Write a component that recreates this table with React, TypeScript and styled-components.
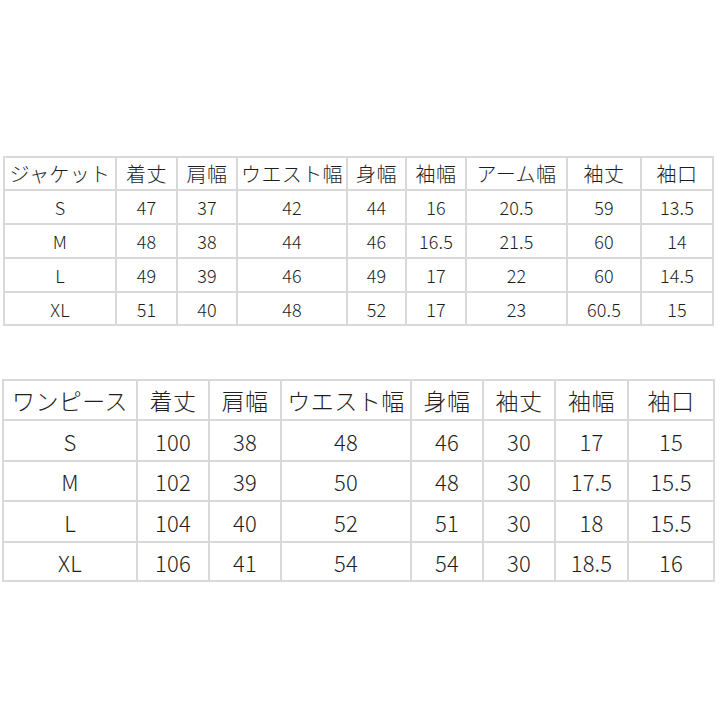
import styled, { createGlobalStyle } from 'styled-components'

interface SizeTable {
  columns: number[]
  rows: number[]
  headFont: number
  bodyFont: number
  head: string[]
  body: string[][]
}

const jacket: SizeTable = {
  columns: [110, 59, 58, 108, 57, 58, 99, 72, 70],
  rows: [31, 32, 32, 32, 31],
  headFont: 20,
  bodyFont: 18,
  head: ['ジャケット', '着丈', '肩幅', 'ウエスト幅', '身幅', '袖幅', 'アーム幅', '袖丈', '袖口'],
  body: [
    ['S', '47', '37', '42', '44', '16', '20.5', '59', '13.5'],
    ['M', '48', '38', '44', '46', '16.5', '21.5', '60', '14'],
    ['L', '49', '39', '46', '49', '17', '22', '60', '14.5'],
    ['XL', '51', '40', '48', '52', '17', '23', '60.5', '15'],
  ],
}

const onePiece: SizeTable = {
  columns: [132, 70, 70, 128, 70, 70, 71, 84],
  rows: [38, 39, 38, 39, 37],
  headFont: 23,
  bodyFont: 22,
  head: ['ワンピース', '着丈', '肩幅', 'ウエスト幅', '身幅', '袖丈', '袖幅', '袖口'],
  body: [
    ['S', '100', '38', '48', '46', '30', '17', '15'],
    ['M', '102', '39', '50', '48', '30', '17.5', '15.5'],
    ['L', '104', '40', '52', '51', '30', '18', '15.5'],
    ['XL', '106', '41', '54', '54', '30', '18.5', '16'],
  ],
}

/**
 * サイズ表ページ
 */
export default function App() {
  return (
    <>
      <GlobalStyle />
      <StyledPage>
        <Table table={jacket} $left={3} $top={156} />
        <Table table={onePiece} $left={2} $top={53} />
      </StyledPage>
    </>
  )
}

/**
 * サイズ表コンポーネント
 */
const Table = ({ table, $left, $top }: { table: SizeTable; $left: number; $top: number }) => (
  <StyledGrid
    $cols={table.columns.map((w) => `${w}px`).join(' ')}
    $rows={table.rows.map((h) => `${h}px`).join(' ')}
    $left={$left}
    $top={$top}
  >
    {table.head.map((label) => (
      <StyledCell key={label} $size={table.headFont} $head>
        {label}
      </StyledCell>
    ))}
    {table.body.map((row) =>
      row.map((value, i) => (
        <StyledCell key={`${row[0]}-${i}`} $size={table.bodyFont}>
          {value}
        </StyledCell>
      ))
    )}
  </StyledGrid>
)

const GlobalStyle = createGlobalStyle`
  html, body {
    margin: 0;
    padding: 0;
    background: #fff;
  }
  body {
    font-family: "Noto Sans CJK JP", "Noto Sans", sans-serif;
    font-weight: 300;
    color: #1e1e1e;
  }
`

const StyledPage = styled.main`
  width: 720px;
  height: 720px;
  display: flex;
  flex-direction: column;
`

const StyledGrid = styled.div<{ $cols: string; $rows: string; $left: number; $top: number }>`
  display: grid;
  grid-template-columns: ${(p) => p.$cols};
  grid-template-rows: ${(p) => p.$rows};
  gap: 2px;
  padding: 2px;
  margin: ${(p) => p.$top}px 0 0 ${(p) => p.$left}px;
  width: max-content;
  background: #d9d9d9;
`

const StyledCell = styled.div<{ $size: number; $head?: boolean }>`
  display: flex;
  align-items: center;
  justify-content: center;
  background: #fff;
  font-size: ${(p) => p.$size}px;
  line-height: 1;
  white-space: nowrap;
  letter-spacing: ${(p) => (p.$head ? '0.02em' : '0.01em')};
`
